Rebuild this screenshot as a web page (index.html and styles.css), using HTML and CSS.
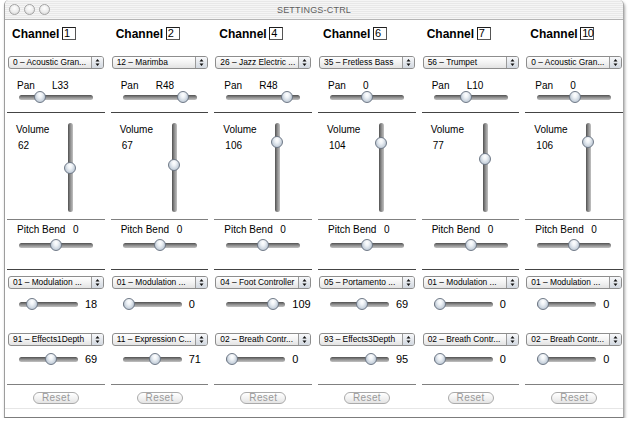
FILE: index.html
```html
<!DOCTYPE html>
<html>
<head>
<meta charset="utf-8">
<title>SETTINGS-CTRL</title>
<link rel="stylesheet" href="styles.css">
</head>
<body>
<div class="window">
  <div class="titlebar">
    <div class="lights"><span class="light"></span><span class="light"></span><span class="light"></span></div>
    <div class="title">SETTINGS-CTRL</div>
    <div></div>
  </div>
  <div class="channels">

    <section class="ch">
      <div class="head"><span class="ch-name">Channel</span><span class="num">1</span></div>
      <div class="popup p1"><span class="ptext">0 – Acoustic Gran...</span><span class="step"><svg viewBox="0 0 11 11"><path d="M3.5 4.5 5.5 2 7.5 4.5Z M3.5 6.5 5.5 9 7.5 6.5Z"/></svg></span></div>
      <div class="pan-row"><span class="lbl">Pan</span><span>L33</span></div>
      <div class="hs"><div class="track"><div class="thumb" style="--f:.244"></div></div></div>
      <hr class="sep s1">
      <div class="vol">
        <div class="vol-text"><div>Volume</div><div class="vval">62</div></div>
        <div class="vtrack"><div class="thumb" style="--f:.488"></div></div>
      </div>
      <hr class="sep s2">
      <div class="pb-row"><span class="lbl">Pitch Bend</span><span>0</span></div>
      <div class="hs pb"><div class="track"><div class="thumb" style="--f:.5"></div></div></div>
      <hr class="sep s3">
      <div class="popup p2"><span class="ptext">01 – Modulation ...</span><span class="step"><svg viewBox="0 0 11 11"><path d="M3.5 4.5 5.5 2 7.5 4.5Z M3.5 6.5 5.5 9 7.5 6.5Z"/></svg></span></div>
      <div class="cc c1"><div class="track"><div class="thumb" style="--f:.142"></div></div><span class="ccval">18</span></div>
      <div class="popup p3"><span class="ptext">91 – Effects1Depth</span><span class="step"><svg viewBox="0 0 11 11"><path d="M3.5 4.5 5.5 2 7.5 4.5Z M3.5 6.5 5.5 9 7.5 6.5Z"/></svg></span></div>
      <div class="cc c2"><div class="track"><div class="thumb" style="--f:.543"></div></div><span class="ccval">69</span></div>
      <hr class="sep s4">
      <button class="reset" disabled>Reset</button>
    </section>

    <section class="ch">
      <div class="head"><span class="ch-name">Channel</span><span class="num">2</span></div>
      <div class="popup p1"><span class="ptext">12 – Marimba</span><span class="step"><svg viewBox="0 0 11 11"><path d="M3.5 4.5 5.5 2 7.5 4.5Z M3.5 6.5 5.5 9 7.5 6.5Z"/></svg></span></div>
      <div class="pan-row"><span class="lbl">Pan</span><span>R48</span></div>
      <div class="hs"><div class="track"><div class="thumb" style="--f:.882"></div></div></div>
      <hr class="sep s1">
      <div class="vol">
        <div class="vol-text"><div>Volume</div><div class="vval">67</div></div>
        <div class="vtrack"><div class="thumb" style="--f:.528"></div></div>
      </div>
      <hr class="sep s2">
      <div class="pb-row"><span class="lbl">Pitch Bend</span><span>0</span></div>
      <div class="hs pb"><div class="track"><div class="thumb" style="--f:.5"></div></div></div>
      <hr class="sep s3">
      <div class="popup p2"><span class="ptext">01 – Modulation ...</span><span class="step"><svg viewBox="0 0 11 11"><path d="M3.5 4.5 5.5 2 7.5 4.5Z M3.5 6.5 5.5 9 7.5 6.5Z"/></svg></span></div>
      <div class="cc c1"><div class="track"><div class="thumb" style="--f:0"></div></div><span class="ccval">0</span></div>
      <div class="popup p3"><span class="ptext">11 – Expression C...</span><span class="step"><svg viewBox="0 0 11 11"><path d="M3.5 4.5 5.5 2 7.5 4.5Z M3.5 6.5 5.5 9 7.5 6.5Z"/></svg></span></div>
      <div class="cc c2"><div class="track"><div class="thumb" style="--f:.559"></div></div><span class="ccval">71</span></div>
      <hr class="sep s4">
      <button class="reset" disabled>Reset</button>
    </section>

    <section class="ch">
      <div class="head"><span class="ch-name">Channel</span><span class="num">4</span></div>
      <div class="popup p1"><span class="ptext">26 – Jazz Electric ...</span><span class="step"><svg viewBox="0 0 11 11"><path d="M3.5 4.5 5.5 2 7.5 4.5Z M3.5 6.5 5.5 9 7.5 6.5Z"/></svg></span></div>
      <div class="pan-row"><span class="lbl">Pan</span><span>R48</span></div>
      <div class="hs"><div class="track"><div class="thumb" style="--f:.882"></div></div></div>
      <hr class="sep s1">
      <div class="vol">
        <div class="vol-text"><div>Volume</div><div class="vval">106</div></div>
        <div class="vtrack"><div class="thumb" style="--f:.835"></div></div>
      </div>
      <hr class="sep s2">
      <div class="pb-row"><span class="lbl">Pitch Bend</span><span>0</span></div>
      <div class="hs pb"><div class="track"><div class="thumb" style="--f:.5"></div></div></div>
      <hr class="sep s3">
      <div class="popup p2"><span class="ptext">04 – Foot Controller</span><span class="step"><svg viewBox="0 0 11 11"><path d="M3.5 4.5 5.5 2 7.5 4.5Z M3.5 6.5 5.5 9 7.5 6.5Z"/></svg></span></div>
      <div class="cc c1"><div class="track"><div class="thumb" style="--f:.858"></div></div><span class="ccval">109</span></div>
      <div class="popup p3"><span class="ptext">02 – Breath Contr...</span><span class="step"><svg viewBox="0 0 11 11"><path d="M3.5 4.5 5.5 2 7.5 4.5Z M3.5 6.5 5.5 9 7.5 6.5Z"/></svg></span></div>
      <div class="cc c2"><div class="track"><div class="thumb" style="--f:0"></div></div><span class="ccval">0</span></div>
      <hr class="sep s4">
      <button class="reset" disabled>Reset</button>
    </section>

    <section class="ch">
      <div class="head"><span class="ch-name">Channel</span><span class="num">6</span></div>
      <div class="popup p1"><span class="ptext">35 – Fretless Bass</span><span class="step"><svg viewBox="0 0 11 11"><path d="M3.5 4.5 5.5 2 7.5 4.5Z M3.5 6.5 5.5 9 7.5 6.5Z"/></svg></span></div>
      <div class="pan-row"><span class="lbl">Pan</span><span>0</span></div>
      <div class="hs"><div class="track"><div class="thumb" style="--f:.504"></div></div></div>
      <hr class="sep s1">
      <div class="vol">
        <div class="vol-text"><div>Volume</div><div class="vval">104</div></div>
        <div class="vtrack"><div class="thumb" style="--f:.819"></div></div>
      </div>
      <hr class="sep s2">
      <div class="pb-row"><span class="lbl">Pitch Bend</span><span>0</span></div>
      <div class="hs pb"><div class="track"><div class="thumb" style="--f:.5"></div></div></div>
      <hr class="sep s3">
      <div class="popup p2"><span class="ptext">05 – Portamento ...</span><span class="step"><svg viewBox="0 0 11 11"><path d="M3.5 4.5 5.5 2 7.5 4.5Z M3.5 6.5 5.5 9 7.5 6.5Z"/></svg></span></div>
      <div class="cc c1"><div class="track"><div class="thumb" style="--f:.543"></div></div><span class="ccval">69</span></div>
      <div class="popup p3"><span class="ptext">93 – Effects3Depth</span><span class="step"><svg viewBox="0 0 11 11"><path d="M3.5 4.5 5.5 2 7.5 4.5Z M3.5 6.5 5.5 9 7.5 6.5Z"/></svg></span></div>
      <div class="cc c2"><div class="track"><div class="thumb" style="--f:.748"></div></div><span class="ccval">95</span></div>
      <hr class="sep s4">
      <button class="reset" disabled>Reset</button>
    </section>

    <section class="ch">
      <div class="head"><span class="ch-name">Channel</span><span class="num">7</span></div>
      <div class="popup p1"><span class="ptext">56 – Trumpet</span><span class="step"><svg viewBox="0 0 11 11"><path d="M3.5 4.5 5.5 2 7.5 4.5Z M3.5 6.5 5.5 9 7.5 6.5Z"/></svg></span></div>
      <div class="pan-row"><span class="lbl">Pan</span><span>L10</span></div>
      <div class="hs"><div class="track"><div class="thumb" style="--f:.425"></div></div></div>
      <hr class="sep s1">
      <div class="vol">
        <div class="vol-text"><div>Volume</div><div class="vval">77</div></div>
        <div class="vtrack"><div class="thumb" style="--f:.606"></div></div>
      </div>
      <hr class="sep s2">
      <div class="pb-row"><span class="lbl">Pitch Bend</span><span>0</span></div>
      <div class="hs pb"><div class="track"><div class="thumb" style="--f:.5"></div></div></div>
      <hr class="sep s3">
      <div class="popup p2"><span class="ptext">01 – Modulation ...</span><span class="step"><svg viewBox="0 0 11 11"><path d="M3.5 4.5 5.5 2 7.5 4.5Z M3.5 6.5 5.5 9 7.5 6.5Z"/></svg></span></div>
      <div class="cc c1"><div class="track"><div class="thumb" style="--f:0"></div></div><span class="ccval">0</span></div>
      <div class="popup p3"><span class="ptext">02 – Breath Contr...</span><span class="step"><svg viewBox="0 0 11 11"><path d="M3.5 4.5 5.5 2 7.5 4.5Z M3.5 6.5 5.5 9 7.5 6.5Z"/></svg></span></div>
      <div class="cc c2"><div class="track"><div class="thumb" style="--f:0"></div></div><span class="ccval">0</span></div>
      <hr class="sep s4">
      <button class="reset" disabled>Reset</button>
    </section>

    <section class="ch">
      <div class="head"><span class="ch-name">Channel</span><span class="num">10</span></div>
      <div class="popup p1"><span class="ptext">0 – Acoustic Gran...</span><span class="step"><svg viewBox="0 0 11 11"><path d="M3.5 4.5 5.5 2 7.5 4.5Z M3.5 6.5 5.5 9 7.5 6.5Z"/></svg></span></div>
      <div class="pan-row"><span class="lbl">Pan</span><span>0</span></div>
      <div class="hs"><div class="track"><div class="thumb" style="--f:.504"></div></div></div>
      <hr class="sep s1">
      <div class="vol">
        <div class="vol-text"><div>Volume</div><div class="vval">106</div></div>
        <div class="vtrack"><div class="thumb" style="--f:.835"></div></div>
      </div>
      <hr class="sep s2">
      <div class="pb-row"><span class="lbl">Pitch Bend</span><span>0</span></div>
      <div class="hs pb"><div class="track"><div class="thumb" style="--f:.5"></div></div></div>
      <hr class="sep s3">
      <div class="popup p2"><span class="ptext">01 – Modulation ...</span><span class="step"><svg viewBox="0 0 11 11"><path d="M3.5 4.5 5.5 2 7.5 4.5Z M3.5 6.5 5.5 9 7.5 6.5Z"/></svg></span></div>
      <div class="cc c1"><div class="track"><div class="thumb" style="--f:0"></div></div><span class="ccval">0</span></div>
      <div class="popup p3"><span class="ptext">02 – Breath Contr...</span><span class="step"><svg viewBox="0 0 11 11"><path d="M3.5 4.5 5.5 2 7.5 4.5Z M3.5 6.5 5.5 9 7.5 6.5Z"/></svg></span></div>
      <div class="cc c2"><div class="track"><div class="thumb" style="--f:0"></div></div><span class="ccval">0</span></div>
      <hr class="sep s4">
      <button class="reset" disabled>Reset</button>
    </section>

  </div>
  <div class="foot-line"></div>
</div>
</body>
</html>
```

FILE: styles.css
```css
* { box-sizing: border-box; }

body {
  margin: 0;
  background: #fff;
  font-family: "Liberation Sans", Arial, sans-serif;
  color: #000;
}

.window {
  margin-left: 4px;
  width: 620px;
  height: 418px;
  background: #fff;
  border-left: 1px solid #9d9d9d;
  border-right: 1px solid #a8a8a8;
  border-bottom: 1px solid #7c7c7c;
  border-radius: 5px 5px 0 0;
  box-shadow: 1px 2px 3px rgba(0, 0, 0, 0.35);
  display: flex;
  flex-direction: column;
}

.titlebar {
  height: 20px;
  display: grid;
  grid-template-columns: 1fr auto 1fr;
  align-items: center;
  border-bottom: 1px solid #b4b4b4;
  border-radius: 5px 5px 0 0;
  background: repeating-linear-gradient(to bottom, #f5f5f5 0 1px, #e8e8e8 1px 2px);
}

.lights {
  display: flex;
  gap: 4px;
  padding-left: 4px;
}

.light {
  width: 11px;
  height: 11px;
  border-radius: 50%;
  border: 1px solid #a3a3a3;
  background: radial-gradient(circle at 50% 35%, #ffffff 0%, #ececec 55%, #cdcdcd 100%);
}

.title {
  font-size: 9px;
  color: #5e5e5e;
  letter-spacing: 0.2px;
}

.channels {
  display: grid;
  grid-template-columns: repeat(6, 1fr);
  column-gap: 6px;
  padding: 6px 0 0 2px;
}

.head {
  height: 15px;
  display: flex;
  align-items: center;
}

.ch-name {
  width: 55px;
  padding-left: 5px;
  font-weight: bold;
  font-size: 12px;
}

.num {
  width: 14px;
  height: 13px;
  border: 1px solid #555;
  border-top-color: #1e1e1e;
  border-left-color: #1e1e1e;
  font-size: 11px;
  line-height: 11px;
  padding-left: 1px;
  letter-spacing: -0.6px;
  white-space: nowrap;
}

.popup {
  margin: 15px 0 0 1px;
  width: 96px;
  height: 13px;
  display: flex;
  border: 1px solid #8d8d8d;
  border-radius: 3px;
  overflow: hidden;
  background: linear-gradient(#ffffff, #f3f3f3 50%, #e3e3e3);
}

.popup.p2 { margin-top: 6px; }
.popup.p3 { margin-top: 22px; }

.ptext {
  flex: 1;
  min-width: 0;
  font-size: 8.4px;
  line-height: 11px;
  padding-left: 4px;
  white-space: nowrap;
  overflow: hidden;
}

.step {
  flex: none;
  width: 12px;
  border-left: 1px solid #9a9a9a;
  background: linear-gradient(#f7f8fa, #d2d8e0);
  display: flex;
}

.step svg {
  width: 11px;
  height: 11px;
  fill: #111;
}

.pan-row {
  margin-top: 11px;
  height: 11px;
  display: flex;
  font-size: 10px;
  line-height: 11px;
}

.pan-row .lbl {
  width: 45px;
  padding-left: 10px;
}

.hs {
  height: 13px;
  display: flex;
  align-items: center;
  padding-left: 12px;
}

.hs.pb { margin-top: 3px; }

.track {
  position: relative;
  width: 74px;
  height: 5px;
  border-radius: 3px;
  background: linear-gradient(#505050, #8a8a8a 45%, #c2c2c2);
}

.thumb {
  position: absolute;
  top: -4px;
  left: calc(var(--f) * (100% - 12px));
  width: 12px;
  height: 12px;
  border-radius: 50%;
  border: 1px solid #6f7987;
  background: radial-gradient(ellipse at 50% 28%, #ffffff 0%, #eef2f6 30%, #c6d0db 68%, #9fadbd 100%);
}

.sep {
  border: 0;
  margin: 8px 0 0;
  height: 1px;
  background: #444;
}

.sep.s2 { margin-top: 0; background: #808080; }
.sep.s3 { margin-top: 17px; }
.sep.s4 { margin-top: 18px; background: #808080; }

.vol {
  height: 106px;
  display: flex;
}

.vol-text {
  width: 61px;
  padding: 11px 0 0 9px;
  font-size: 10px;
  line-height: 12px;
}

.vval {
  margin-top: 4px;
  padding-left: 2px;
}

.vtrack {
  position: relative;
  margin-top: 10px;
  width: 5px;
  height: 89px;
  border-radius: 3px;
  background: linear-gradient(to right, #505050, #8a8a8a 45%, #c2c2c2);
}

.vtrack .thumb {
  left: -4px;
  top: calc((1 - var(--f)) * (100% - 12px));
}

.pb-row {
  margin-top: 4px;
  height: 12px;
  display: flex;
  font-size: 10px;
  line-height: 12px;
}

.pb-row .lbl {
  width: 66px;
  padding-left: 10px;
}

.cc {
  margin-top: 9px;
  height: 13px;
  display: flex;
  align-items: center;
  padding-left: 12px;
}

.cc.c2 { margin-top: 7px; }

.cc .track { width: 59px; }

.ccval {
  margin-left: 7px;
  font-size: 11px;
  line-height: 13px;
}

.reset {
  display: block;
  appearance: none;
  margin: 7px 0 0 26px;
  width: 46px;
  height: 12px;
  padding: 0;
  border: 1px solid #aaaaaa;
  border-radius: 7px;
  background: linear-gradient(#ffffff, #f3f3f3 50%, #e4e4e4);
  color: #999;
  font-family: inherit;
  font-size: 10px;
  line-height: 10px;
  letter-spacing: 0.4px;
}

.foot-line {
  margin-top: 4px;
  height: 1px;
  background: #e6e6e6;
}
```
